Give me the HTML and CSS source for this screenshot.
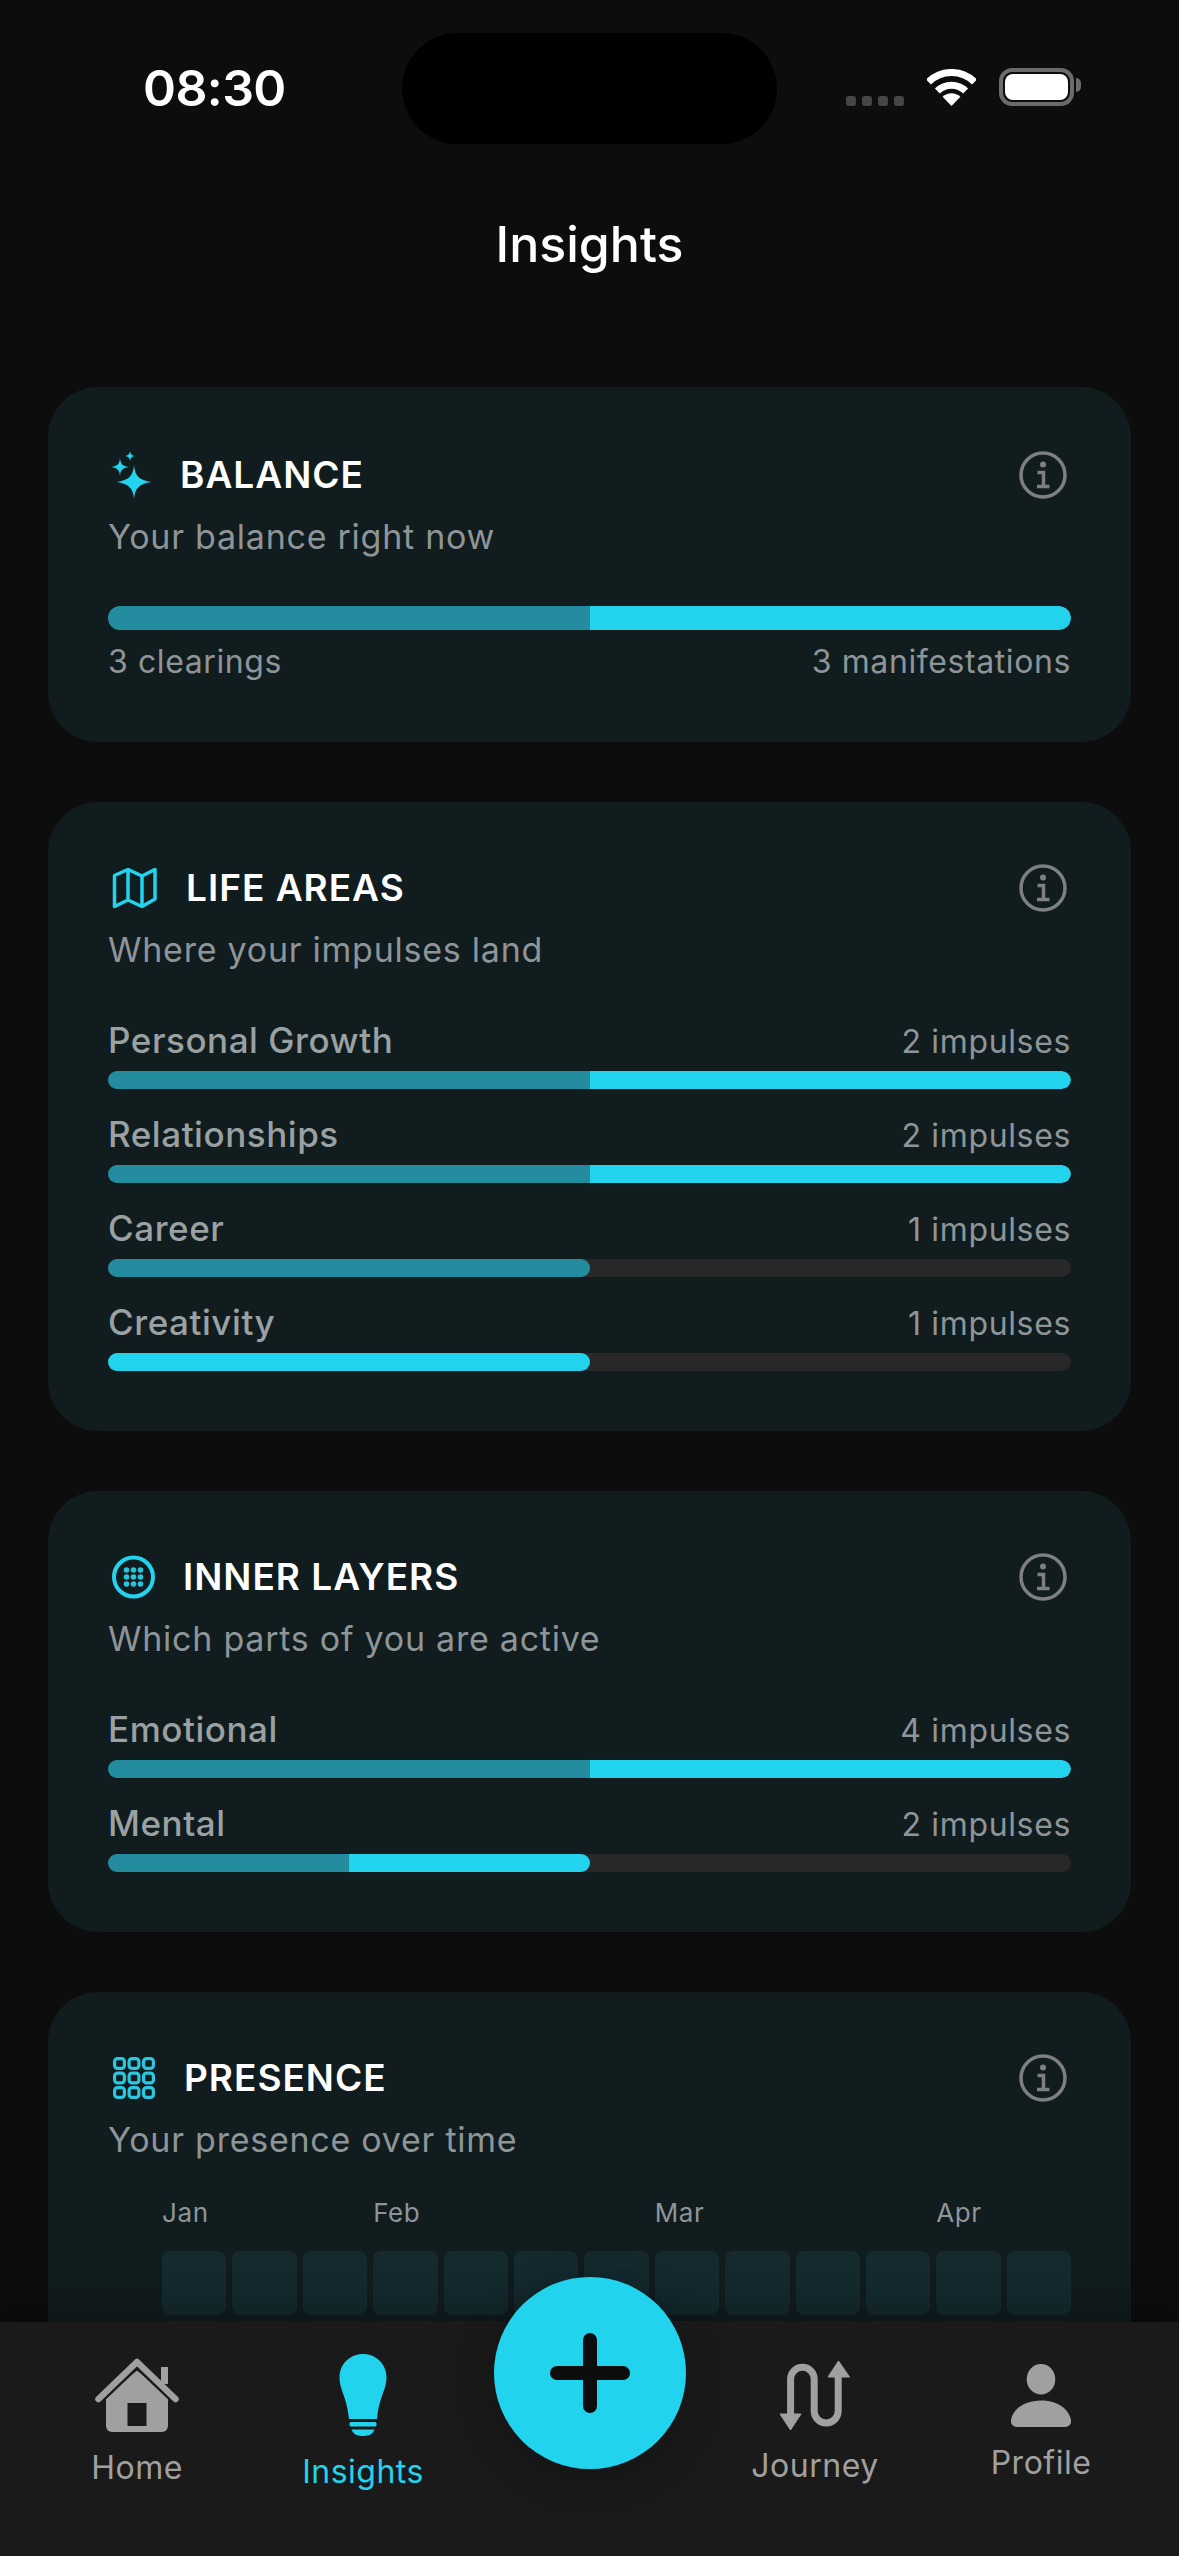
FILE: index.html
```html
<!DOCTYPE html>
<html lang="en">
<head>
<meta charset="utf-8">
<title>Insights</title>
<link rel="stylesheet" href="styles.css">
</head>
<body>
<div class="screen">
  <div class="status">
    <span class="time">08:30</span>
    <div class="island"></div>
    <div class="status-icons">
      <div class="signal"><i></i><i></i><i></i><i></i></div>
      <svg class="wifi" viewBox="0 0 49 37" fill="none" stroke="#fff" stroke-width="7"><path d="M1.5 13A32.5 32.5 0 0 1 47.5 13"/><path d="M10.4 22A20 20 0 0 1 38.6 22"/><path d="M24.5 37L15.6 27.7A13 13 0 0 1 33.4 27.7Z" fill="#fff" stroke="none"/></svg>
      <div class="battery"><div class="battery-level"></div><div class="battery-tip"></div></div>
    </div>
  </div>
  <h1 class="page-title">Insights</h1>

  <main class="cards">
    <section class="card card-balance">
      <header class="card-head">
        <svg class="ic ic-spark" viewBox="0 0 52 48" fill="#22d3ee"><path d="M26 14C27 25 31 29 43.500 31C31 33 27 37 26 48C25 37 21 33 8.500 31C21 29 25 25 26 14Z"/><path d="M12 7C12.500 13 14.500 15 20.500 16C14.500 17 12.500 19 12 25C11.500 19 9.500 17 3.500 16C9.500 15 11.500 13 12 7Z"/><path d="M22 0C22.300 3.200 23.800 4.700 27 5C23.800 5.300 22.300 6.800 22 10C21.700 6.800 20.200 5.300 17 5C20.200 4.700 21.700 3.200 22 0Z"/></svg>
        <h2 class="card-title">BALANCE</h2>
        <svg class="info" viewBox="0 0 48 48" fill="none" stroke="#7d7f80" stroke-width="3.500"><circle cx="24" cy="24" r="22"/><circle cx="24" cy="13.500" r="3" fill="#7d7f80" stroke="none"/><path d="M18.500 21.500H24.500V35.500M18 35.500H30.500"/></svg>
      </header>
      <p class="card-sub">Your balance right now</p>
      <div class="track track-lg"><div class="fill" style="width:100%"><span class="seg dim" style="width:50%"></span><span class="seg bright" style="width:50%"></span></div></div>
      <div class="balance-labels"><span>3 clearings</span><span>3 manifestations</span></div>
    </section>

    <section class="card">
      <header class="card-head">
        <svg class="ic ic-map" viewBox="0 0 58 40" fill="none" stroke="#22d3ee" stroke-width="3.500" stroke-linejoin="round"><path d="M6.500 7.500L20 1.500L34 8L47 1.500V31L34 38.500L20 32L6.500 38.500Z"/><path d="M20 1.500V32M34 8V38.500"/></svg>
        <h2 class="card-title">LIFE AREAS</h2>
        <svg class="info" viewBox="0 0 48 48" fill="none" stroke="#7d7f80" stroke-width="3.500"><circle cx="24" cy="24" r="22"/><circle cx="24" cy="13.500" r="3" fill="#7d7f80" stroke="none"/><path d="M18.500 21.500H24.500V35.500M18 35.500H30.500"/></svg>
      </header>
      <p class="card-sub">Where your impulses land</p>
      <div class="rows">
        <div class="row"><div class="row-head"><span class="row-name">Personal Growth</span><span class="row-count">2 impulses</span></div><div class="track"><div class="fill" style="width:100%"><span class="seg dim" style="width:50%"></span><span class="seg bright" style="width:50%"></span></div></div></div>
        <div class="row"><div class="row-head"><span class="row-name">Relationships</span><span class="row-count">2 impulses</span></div><div class="track"><div class="fill" style="width:100%"><span class="seg dim" style="width:50%"></span><span class="seg bright" style="width:50%"></span></div></div></div>
        <div class="row"><div class="row-head"><span class="row-name">Career</span><span class="row-count">1 impulses</span></div><div class="track"><div class="fill" style="width:50%"><span class="seg dim" style="width:100%"></span></div></div></div>
        <div class="row"><div class="row-head"><span class="row-name">Creativity</span><span class="row-count">1 impulses</span></div><div class="track"><div class="fill" style="width:50%"><span class="seg bright" style="width:100%"></span></div></div></div>
      </div>
    </section>

    <section class="card">
      <header class="card-head">
        <svg class="ic ic-layers" viewBox="0 0 55 44" fill="#22d3ee"><circle cx="25.500" cy="22" r="19.500" fill="none" stroke="#22d3ee" stroke-width="4"/><g fill="#27c4dc"><circle cx="18.500" cy="15" r="2.800"/><circle cx="25.500" cy="15" r="2.800"/><circle cx="32.500" cy="15" r="2.800"/><circle cx="18.500" cy="22" r="2.800"/><circle cx="25.500" cy="22" r="2.800"/><circle cx="32.500" cy="22" r="2.800"/><circle cx="18.500" cy="29" r="2.800"/><circle cx="25.500" cy="29" r="2.800"/><circle cx="32.500" cy="29" r="2.800"/></g></svg>
        <h2 class="card-title">INNER LAYERS</h2>
        <svg class="info" viewBox="0 0 48 48" fill="none" stroke="#7d7f80" stroke-width="3.500"><circle cx="24" cy="24" r="22"/><circle cx="24" cy="13.500" r="3" fill="#7d7f80" stroke="none"/><path d="M18.500 21.500H24.500V35.500M18 35.500H30.500"/></svg>
      </header>
      <p class="card-sub">Which parts of you are active</p>
      <div class="rows">
        <div class="row"><div class="row-head"><span class="row-name">Emotional</span><span class="row-count">4 impulses</span></div><div class="track"><div class="fill" style="width:100%"><span class="seg dim" style="width:50%"></span><span class="seg bright" style="width:50%"></span></div></div></div>
        <div class="row"><div class="row-head"><span class="row-name">Mental</span><span class="row-count">2 impulses</span></div><div class="track"><div class="fill" style="width:50%"><span class="seg dim" style="width:50%"></span><span class="seg bright" style="width:50%"></span></div></div></div>
      </div>
    </section>

    <section class="card">
      <header class="card-head">
        <svg class="ic ic-grid" viewBox="0 0 56 42" fill="none" stroke="#2bc6e0" stroke-width="3.200"><rect x="6.600" y="1.600" width="9.800" height="9.800" rx="3"/><rect x="21.100" y="1.600" width="9.800" height="9.800" rx="3"/><rect x="35.600" y="1.600" width="9.800" height="9.800" rx="3"/><rect x="6.600" y="16.100" width="9.800" height="9.800" rx="3"/><rect x="21.100" y="16.100" width="9.800" height="9.800" rx="3"/><rect x="35.600" y="16.100" width="9.800" height="9.800" rx="3"/><rect x="6.600" y="30.600" width="9.800" height="9.800" rx="3"/><rect x="21.100" y="30.600" width="9.800" height="9.800" rx="3"/><rect x="35.600" y="30.600" width="9.800" height="9.800" rx="3"/></svg>
        <h2 class="card-title">PRESENCE</h2>
        <svg class="info" viewBox="0 0 48 48" fill="none" stroke="#7d7f80" stroke-width="3.500"><circle cx="24" cy="24" r="22"/><circle cx="24" cy="13.500" r="3" fill="#7d7f80" stroke="none"/><path d="M18.500 21.500H24.500V35.500M18 35.500H30.500"/></svg>
      </header>
      <p class="card-sub">Your presence over time</p>
      <div class="heat">
        <div class="months"><span class="m3">Jan</span><span class="m4">Feb</span><span class="m4">Mar</span><span class="m2">Apr</span></div>
        <div class="cells">
          <i></i><i></i><i></i><i></i><i></i><i></i><i></i><i></i><i></i><i></i><i></i><i></i><i></i>
          <i></i><i></i><i></i><i></i><i></i><i></i><i></i><i></i><i></i><i></i><i></i><i></i><i></i>
        </div>
      </div>
    </section>
  </main>

  <nav class="tabbar">
    <a class="tab">
      <svg class="tab-ic home" viewBox="0 0 84 74"><path d="M11 37L42 12.500L73 37V68A6 6 0 0 1 67 74H17A6 6 0 0 1 11 68Z" fill="#a0a0a0"/><rect x="32.500" y="45" width="19" height="23" fill="#1a1a1a"/><path d="M66 9H73V26H66Z" fill="#a0a0a0"/><path d="M3 46.500L42 9.500L81 46.500" fill="none" stroke="#1a1a1a" stroke-width="3.500"/><path d="M3.500 41L42 4L80.500 41" fill="none" stroke="#a0a0a0" stroke-width="6.500" stroke-linecap="round" stroke-linejoin="round"/></svg>
      <span class="tab-label">Home</span>
    </a>
    <a class="tab active">
      <svg class="tab-ic bulb" viewBox="0 0 48 82" fill="#22d3ee"><path d="M24 0C37 0 47.500 10 47.500 23.500C47.500 36 40 43 38 65H10C8 43 .5 36 .5 23.500C.5 10 11 0 24 0Z"/><rect x="10.500" y="68" width="27" height="4.500" rx="1.500"/><path d="M12.500 75.500H35.500C34 80 30 82 24 82C18 82 14 80 12.500 75.500Z"/></svg>
      <span class="tab-label">Insights</span>
    </a>
    <div class="tab-spacer"></div>
    <a class="tab">
      <svg class="tab-ic journey" viewBox="0 0 70 69"><path d="M10.600 54V18A11.800 11.800 0 0 1 34.200 18V50A12 12 0 0 0 58.200 50V14" fill="none" stroke="#a0a0a0" stroke-width="7"/><path d="M0 53H21L10.500 69Z" fill="#a0a0a0" stroke="#a0a0a0" stroke-width="1" stroke-linejoin="round"/><path d="M48 16H69.500L58.500 0Z" fill="#a0a0a0" stroke="#a0a0a0" stroke-width="1" stroke-linejoin="round"/></svg>
      <span class="tab-label">Journey</span>
    </a>
    <a class="tab">
      <svg class="tab-ic profile" viewBox="0 0 60 63" fill="#a0a0a0"><ellipse cx="30" cy="15.300" rx="14.300" ry="15.300"/><path d="M6 63H54A6 6 0 0 0 60 56C58 44 45 36.500 30 36.500C15 36.500 2 44 0 56A6 6 0 0 0 6 63Z"/></svg>
      <span class="tab-label">Profile</span>
    </a>
    <button class="fab" type="button" aria-label="Add"><span class="plus"></span></button>
  </nav>
</div>
</body>
</html>
```

FILE: styles.css
```css
* { box-sizing: border-box; }
html, body { margin: 0; padding: 0; background: #0d0d0d; }
body { font-family: Inter, "Noto Sans", sans-serif; color: #fff; }

.screen { position: relative; width: 1179px; height: 2556px; overflow: hidden; background: #0d0d0d; }

/* status bar */
.status { position: relative; height: 144px; display: flex; justify-content: space-between; padding: 0 105px 0 143px; }
.time { margin-top: 58px; font-size: 50px; line-height: 60px; font-weight: 600; letter-spacing: -.6px; }
.island { position: absolute; left: 402px; top: 33px; width: 375px; height: 111px; border-radius: 56px; background: #000; }
.status-icons { display: flex; align-items: flex-start; margin-top: 68px; }
.signal { display: flex; gap: 6px; margin-top: 28px; }
.signal i { width: 10px; height: 10px; border-radius: 3px; background: #454545; }
.wifi { width: 49px; height: 37px; margin-left: 23px; margin-top: 1px; }
.battery { position: relative; width: 75px; height: 38px; margin-left: 23px; border: 4px solid #6b6b6b; border-radius: 13px; padding: 2px; }
.battery-level { width: 100%; height: 100%; border-radius: 8px; background: #fff; }
.battery-tip { position: absolute; right: -11px; top: 6px; width: 5px; height: 14px; border-radius: 0 6px 6px 0; background: #6b6b6b; }

.page-title { margin: 70px 0 0; height: 60px; font-size: 50px; line-height: 60px; font-weight: 500; text-align: center; }

/* cards */
.cards { display: flex; flex-direction: column; gap: 60px; padding: 0 48px; margin-top: 113px; }
.card { padding: 58px 60px 60px; border-radius: 50px; background: #111c1f; }
.card-balance { padding-top: 60px; }
.card-head { display: flex; align-items: center; height: 56px; }
.ic { flex: none; }
.ic-spark { width: 52px; height: 48px; margin-right: 20px; }
.ic-map { width: 58px; height: 40px; margin-right: 20px; }
.ic-layers { width: 55px; height: 44px; margin-right: 20px; }
.ic-grid { width: 56px; height: 42px; margin-right: 20px; }
.card-title { flex: 1; margin: 0; font-size: 37px; line-height: 56px; font-weight: 600; letter-spacing: 1px; }
.info { flex: none; width: 48px; height: 48px; margin-right: 4px; }
.card-sub { margin: 12px 0 0; font-size: 34px; line-height: 44px; letter-spacing: .75px; color: #8e9598; }

/* bars */
.track { height: 18px; border-radius: 9px; background: #282828; overflow: hidden; }
.track-lg { height: 24px; border-radius: 12px; margin-top: 47px; }
.fill { display: flex; height: 100%; overflow: hidden; border-radius: 0 12px 12px 0; }
.seg { display: block; height: 100%; }
.dim { background: #238c9f; }
.bright { background: #22d3ee; }

.balance-labels { display: flex; justify-content: space-between; margin-top: 12px; font-size: 32px; line-height: 40px; letter-spacing: .6px; color: #8e9598; }

.rows { display: flex; flex-direction: column; gap: 24px; margin-top: 47px; }
.row-head { display: flex; justify-content: space-between; align-items: baseline; height: 42px; margin-bottom: 10px; line-height: 42px; }
.row-name { font-size: 35px; font-weight: 500; letter-spacing: .55px; color: #9aa1a3; }
.row-count { font-size: 32px; letter-spacing: .65px; color: #8e9598; }

/* presence */
.heat { margin-top: 33px; padding-left: 54px; }
.months { display: grid; grid-template-columns: repeat(13, 1fr); column-gap: 6px; height: 36px; font-size: 26px; line-height: 36px; letter-spacing: .6px; color: #8e9598; }
.m3 { grid-column: span 3; }
.m4 { grid-column: span 4; }
.m2 { grid-column: span 2; }
.cells { display: grid; grid-template-columns: repeat(13, 1fr); gap: 6px; margin-top: 20px; }
.cells i { display: block; aspect-ratio: 1; border-radius: 8px; background: #142a2f; }

/* tab bar */
.tabbar { position: absolute; left: 0; right: 0; bottom: 0; height: 234px; padding: 0 24px 32px; display: grid; grid-template-columns: repeat(5, 226px); align-items: center; background: #1a1a1a; box-shadow: 0 -10px 40px rgba(0, 0, 0, .3); }
.tab { display: flex; flex-direction: column; align-items: center; color: #a0a0a0; }
.tab-label { margin-top: 16px; font-size: 32px; line-height: 40px; letter-spacing: .5px; }
.active { color: #22d3ee; }
.tab-ic { display: block; flex: none; }
.home { width: 84px; height: 74px; }
.bulb { width: 48px; height: 82px; }
.journey { width: 70px; height: 69px; }
.profile { width: 60px; height: 63px; }
.fab { position: absolute; left: 494px; top: -45px; width: 192px; height: 192px; padding: 0; border: 0; border-radius: 50%; background: #22d3ee; box-shadow: 0 8px 40px rgba(0, 0, 0, .25); }
.plus { position: absolute; left: 56px; top: 89px; width: 80px; height: 14px; border-radius: 7px; background: #0d0d0d; }
.plus::after { content: ""; position: absolute; left: 33px; top: -33px; width: 14px; height: 80px; border-radius: 7px; background: #0d0d0d; }
```
